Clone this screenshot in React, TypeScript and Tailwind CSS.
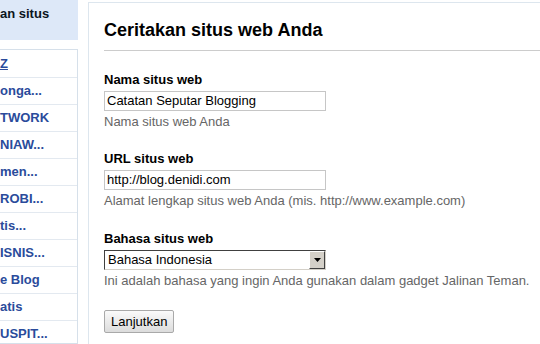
const links = [
  'Z',
  'onga...',
  'TWORK',
  'NIAW...',
  'men...',
  'ROBI...',
  'tis...',
  'ISNIS...',
  'e Blog',
  'atis',
  'USPIT...',
];

function Field({
  label,
  help,
  children,
  className = '',
}: {
  label: string;
  help: string;
  children: React.ReactNode;
  className?: string;
}) {
  return (
    <div className={className}>
      <div className="font-bold text-[13px] leading-[16px] text-black">{label}</div>
      <div className="mt-[3px]">{children}</div>
      <div className="mt-[3px] text-[13px] leading-[16px] text-[#666]">{help}</div>
    </div>
  );
}

export default function App() {
  return (
    <div
      className="w-[540px] h-[344px] overflow-hidden bg-white flex gap-[10px]"
      style={{ fontFamily: '"Liberation Sans", Arial, sans-serif' }}
    >
      <aside className="w-[78px] flex-shrink-0 flex flex-col min-h-0">
        <div className="h-[40px] flex-shrink-0 bg-[#dde8f8] pt-[6px] font-bold text-[13px] leading-[16px] text-[#0b1420] whitespace-nowrap">
          an situs
        </div>
        <ul className="mt-[9px] flex-1 min-h-0 overflow-hidden border border-l-0 border-[#d6e0ea]">
          {links.map((l, i) => (
            <li
              key={l}
              className={`h-[27px] flex items-center font-bold text-[13px] text-[#2a4b9b] whitespace-nowrap ${
                i > 0 ? 'border-t border-[#e3e9f0]' : ''
              }`}
            >
              <span className={i === 0 ? 'underline' : ''}>{l}</span>
            </li>
          ))}
        </ul>
      </aside>

      <main className="flex-1 mt-[2px] border-l border-t border-[#dde6ee] pl-[15px]">
        <h1 className="pt-[17px] pb-[10px] font-bold text-[18px] leading-[20px] text-black border-b border-[#cccccc]">
          Ceritakan situs web Anda
        </h1>

        <Field label="Nama situs web" help="Nama situs web Anda" className="mt-[21px]">
          <div className="w-[222px] h-[20px] border border-[#c6c6c6] text-[13px] leading-[18px] px-[2px] text-black">
            Catatan Seputar Blogging
          </div>
        </Field>

        <Field
          label="URL situs web"
          help="Alamat lengkap situs web Anda (mis. http://www.example.com)"
          className="mt-[21px]"
        >
          <div className="w-[222px] h-[20px] border border-[#c6c6c6] text-[13px] leading-[18px] px-[2px] text-black">
            http://blog.denidi.com
          </div>
        </Field>

        <Field
          label="Bahasa situs web"
          help="Ini adalah bahasa yang ingin Anda gunakan dalam gadget Jalinan Teman."
          className="mt-[22px]"
        >
          <div className="w-[222px] h-[20px] flex border border-t-[#404040] border-l-[#404040] border-b-[#d4d0c8] border-r-[#d4d0c8] bg-white">
            <span className="flex-1 text-[13px] leading-[18px] px-[3px] text-black">Bahasa Indonesia</span>
            <span className="w-[16px] h-[18px] bg-[#d4d0c8] border border-t-white border-l-white border-b-[#404040] border-r-[#404040] flex items-center justify-center">
              <svg width="7" height="4" viewBox="0 0 7 4">
                <path d="M0 0H7L3.5 4Z" fill="#000" />
              </svg>
            </span>
          </div>
        </Field>

        <button className="mt-[21px] h-[23px] px-[6px] rounded-[2px] border border-[#a9a9a9] bg-gradient-to-b from-[#fafafa] to-[#dcdcdc] text-[13px] leading-[20px] text-black">
          Lanjutkan
        </button>
      </main>
    </div>
  );
}
